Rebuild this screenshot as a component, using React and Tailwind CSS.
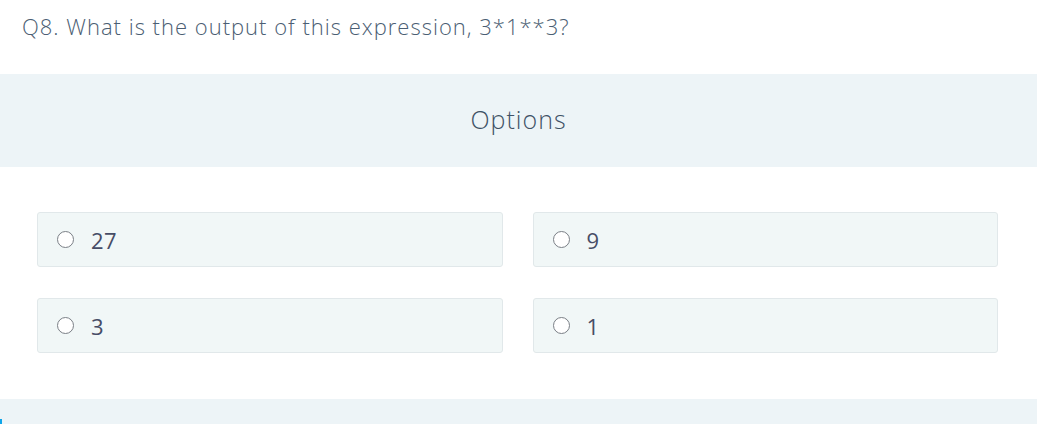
import React from 'react';

const options = ['27', '9', '3', '1'];

function OptionCard({ label }) {
    return (
        <div className="h-[55px] flex items-center pl-[19px] bg-[#f1f7f7] border border-[#e1e8ea] rounded-[3px] cursor-pointer">
            <span className="w-[17px] h-[17px] rounded-full border-[1.5px] border-[#7a7f86] bg-white shrink-0" />
            <span className="ml-[17px] text-[22px] text-[#474d66] leading-none tracking-[0.5px]">{label}</span>
        </div>
    );
}

export default function App() {
    return (
        <div className="relative w-[1037px] h-[424px] overflow-hidden bg-white font-['Open_Sans',sans-serif]">
            <div className="pl-[22px] pt-[11px] h-[74px]">
                <h2 className="text-[22px] text-[#4b5e73] leading-[30px] font-light tracking-[1px]">
                    Q8. What is the output of this expression, 3*1**3?
                </h2>
            </div>

            <div className="h-[93px] bg-[#edf4f7] flex items-center justify-center">
                <h3 className="text-[25px] text-[#3f5266] font-light tracking-[1px] pb-[2px]">Options</h3>
            </div>

            <div className="grid grid-cols-2 gap-x-[30px] gap-y-[31px] pl-[37px] pr-[39px] pt-[45px]">
                {options.map((o) => (
                    <OptionCard key={o} label={o} />
                ))}
            </div>

            <div className="mt-[46px] h-[30px] bg-[#edf4f7]" />
            <div className="absolute left-0 bottom-0 w-[2px] h-[5px] bg-[#0ea5e9]" />
        </div>
    );
}
